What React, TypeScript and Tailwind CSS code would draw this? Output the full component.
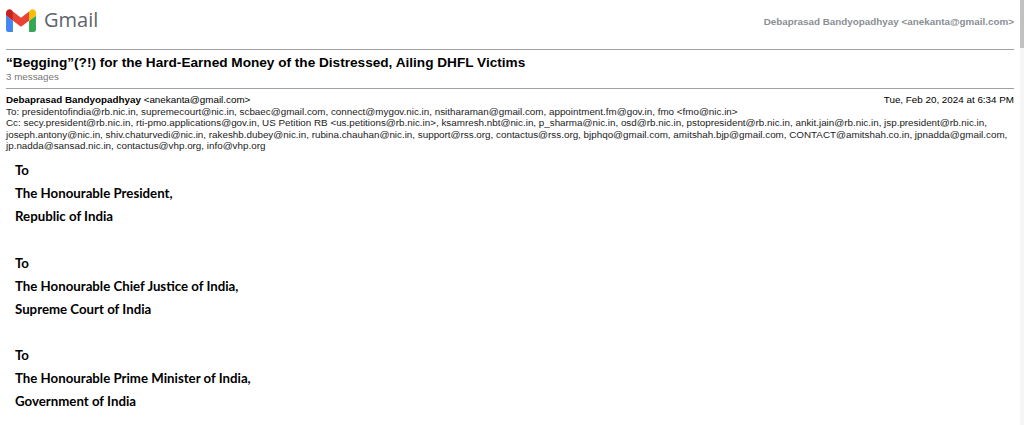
const blocks = [
  ['To', 'The Honourable President,', 'Republic of India'],
  ['To', 'The Honourable Chief Justice of India,', 'Supreme Court of India'],
  ['To', 'The Honourable Prime Minister of India,', 'Government of India'],
];

function GmailLogo() {
  return (
    <svg width="30" height="23" viewBox="0 0 52 40" className="shrink-0">
      <path d="M4 40h8V20.5L0 11.5V36c0 2.2 1.8 4 4 4z" fill="#4285f4" />
      <path d="M40 40h8c2.2 0 4-1.8 4-4V11.5l-12 9z" fill="#34a853" />
      <path d="M40 4.5v16l12-9V6.5c0-4.9-5.6-7.7-9.6-4.800z" fill="#fbbc04" />
      <path d="M12 20.500v-16l14 10.500 14-10.500v16L26 31z" fill="#ea4335" />
      <path d="M0 6.500v5l12 9v-16L9.600 1.700C5.600-1.200 0 1.600 0 6.500z" fill="#c5221f" />
    </svg>
  );
}

export default function App() {
  return (
    <div className="h-[425px] overflow-hidden flex bg-white font-['Liberation_Sans',Arial,sans-serif] text-black">
      <div className="flex-1 min-w-0 pl-[6px] pr-[6px]">
        {/* Header */}
        <div className="h-[49px] flex items-start justify-between">
          <div className="flex items-center gap-[8px] pt-[8px]">
            <GmailLogo />
            <span className="font-['Open_Sans',sans-serif] text-[20px] leading-[24px] text-[#5f6368]">Gmail</span>
          </div>
          <div className="pt-[15px] text-[9.85px] leading-[13px] font-bold text-[#8a8f94]">
            Debaprasad Bandyopadhyay &lt;anekanta@gmail.com&gt;
          </div>
        </div>
        <div className="h-px bg-[#a0a0a0]" />

        {/* Subject */}
        <div className="pt-[5px] h-[38px]">
          <h1 className="text-[13.62px] leading-[16px] font-bold">
            “Begging”(?!) for the Hard-Earned Money of the Distressed, Ailing DHFL Victims
          </h1>
          <p className="text-[9.8px] leading-[12px] text-[#777]">3 messages</p>
        </div>
        <div className="h-px bg-[#a0a0a0]" />

        {/* Message header */}
        <div className="pt-[5px] text-[9.83px] leading-[11.5px]">
          <div className="flex justify-between">
            <div>
              <b>Debaprasad Bandyopadhyay</b> &lt;anekanta@gmail.com&gt;
            </div>
            <div>Tue, Feb 20, 2024 at 6:34 PM</div>
          </div>
          <div className="text-[#222]">
            <div>
              To: presidentofindia@rb.nic.in, supremecourt@nic.in, scbaec@gmail.com, connect@mygov.nic.in,
              nsitharaman@gmail.com, appointment.fm@gov.in, fmo &lt;fmo@nic.in&gt;
            </div>
            <div>
              Cc: secy.president@rb.nic.in, rti-pmo.applications@gov.in, US Petition RB &lt;us.petitions@rb.nic.in&gt;,
              ksamresh.nbt@nic.in, p_sharma@nic.in, osd@rb.nic.in, pstopresident@rb.nic.in, ankit.jain@rb.nic.in,
              jsp.president@rb.nic.in, joseph.antony@nic.in, shiv.chaturvedi@nic.in, rakeshb.dubey@nic.in,
              rubina.chauhan@nic.in, support@rss.org, contactus@rss.org, bjphqo@gmail.com, amitshah.bjp@gmail.com,
              CONTACT@amitshah.co.in, jpnadda@gmail.com, jp.nadda@sansad.nic.in, contactus@vhp.org, info@vhp.org
            </div>
          </div>
        </div>

        {/* Body */}
        <div className="pl-[9px] pt-[7.7px] font-['Lato',sans-serif] font-bold text-[13.25px] leading-[23.1px] text-black">
          {blocks.map((lines, i) => (
            <div key={i} className="mb-[23.1px]">
              {lines.map((l) => (
                <div key={l}>{l}</div>
              ))}
            </div>
          ))}
        </div>
      </div>

      {/* Scrollbar */}
      <div className="w-[4px] shrink-0 bg-[#f6f6f6]">
        <div className="h-[48px] bg-[#c1c1c1]" />
      </div>
    </div>
  );
}
